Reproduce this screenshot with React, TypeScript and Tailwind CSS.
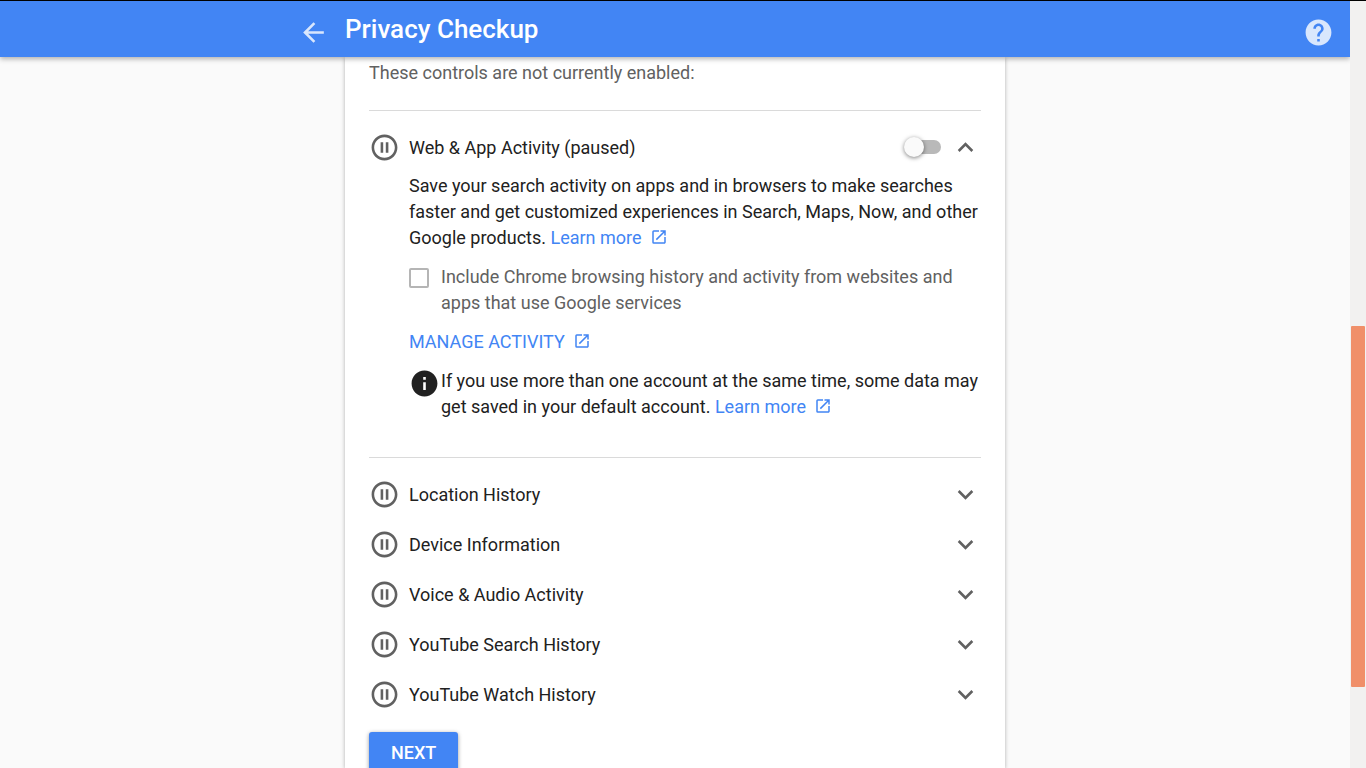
import { useState } from "react";
import {
  MdArrowBack,
  MdExpandLess,
  MdExpandMore,
  MdHelp,
  MdInfo,
  MdOpenInNew,
  MdPauseCircleOutline,
} from "react-icons/md";

const collapsedControls = [
  "Location History",
  "Device Information",
  "Voice & Audio Activity",
  "YouTube Search History",
  "YouTube Watch History",
];

function ExternalLink({ children }: { children: string }) {
  return (
    <a href="#" className="whitespace-nowrap text-[#4285f4]">
      {children}
      <MdOpenInNew className="ml-2 inline-block size-[18px] align-[-2px]" aria-hidden />
    </a>
  );
}

function Header() {
  return (
    <header className="z-10 grid h-14 shrink-0 grid-cols-[1fr_minmax(0,660px)_1fr] items-start bg-[#4285f4] text-white shadow-[0_2px_5px_rgba(0,0,0,0.3)]">
      <div className="flex justify-end pt-4 pr-4">
        <button type="button" aria-label="Back" className="text-white/80">
          <MdArrowBack className="size-[31px]" />
        </button>
      </div>
      <h1 className="pt-3 text-[26px] leading-8 font-medium">Privacy Checkup</h1>
      <div className="flex justify-end pt-4 pr-4">
        <button type="button" aria-label="Help" className="text-white/80">
          <MdHelp className="size-[31px]" />
        </button>
      </div>
    </header>
  );
}

function WebActivity() {
  const [enabled, setEnabled] = useState(false);
  const [chrome, setChrome] = useState(false);
  return (
    <section className="mt-6 border-t border-[#dadada] pt-3 pb-[37px]">
      <div className="mb-px flex h-[49px] items-center gap-[9px]">
        <MdPauseCircleOutline className="size-[31px] text-[#616161]" aria-hidden />
        <h2 className="flex-1">
          <label htmlFor="web-activity">Web &amp; App Activity (paused)</label>
        </h2>
        <input
          id="web-activity"
          type="checkbox"
          role="switch"
          checked={enabled}
          onChange={(e) => setEnabled(e.target.checked)}
          className="relative mb-px h-3.5 w-9 appearance-none rounded-full bg-[#b9b9b9] before:absolute before:-top-[3px] before:-left-px before:size-5 before:rounded-full before:bg-[#fafafa] before:shadow-[0_1px_4px_rgba(0,0,0,0.5)] checked:bg-[#a1c2fa] checked:before:left-[17px] checked:before:bg-[#4285f4]"
        />
        <button type="button" aria-label="Collapse" className="text-[#616161]">
          <MdExpandLess className="size-[31px]" />
        </button>
      </div>
      <div className="flex flex-col gap-[13px] pl-10">
        <p>
          Save your search activity on apps and in browsers to make searches faster and get customized
          experiences in Search, Maps, Now, and other Google products. <ExternalLink>Learn more</ExternalLink>
        </p>
        <div className="flex gap-3 text-[#616161]">
          <input
            id="chrome-history"
            type="checkbox"
            checked={chrome}
            onChange={(e) => setChrome(e.target.checked)}
            className="mt-1 size-5 shrink-0 appearance-none rounded-[2px] border-2 border-[#b5b5b5] checked:border-[#4285f4] checked:bg-[#4285f4]"
          />
          <label htmlFor="chrome-history">
            Include Chrome browsing history and activity from websites and apps that use Google services
          </label>
        </div>
        <div>
          <ExternalLink>MANAGE ACTIVITY</ExternalLink>
        </div>
        <div className="flex gap-px">
          <MdInfo className="size-[31px] shrink-0" aria-hidden />
          <p>
            If you use more than one account at the same time, some data may get saved in your default
            account. <ExternalLink>Learn more</ExternalLink>
          </p>
        </div>
      </div>
    </section>
  );
}

export default function App() {
  return (
    <div className="flex h-screen overflow-hidden border-t border-black bg-[#fafafa] font-[Roboto,sans-serif] text-lg leading-[26px] text-[#212121]">
      <div className="flex min-w-0 flex-1 flex-col overflow-hidden">
        <Header />
        <main className="mx-auto min-h-0 w-full max-w-[660px] flex-1 bg-white px-6 pt-[3px] shadow-[0_1px_4px_rgba(0,0,0,0.3)]">
          <p className="text-[#616161]">These controls are not currently enabled:</p>
          <WebActivity />
          <ul className="border-t border-[#dadada] py-3">
            {collapsedControls.map((name) => (
              <li key={name} className="pb-px">
                <button type="button" className="flex h-[49px] w-full items-center gap-[9px] text-left">
                  <MdPauseCircleOutline className="size-[31px] text-[#616161]" aria-hidden />
                  <span className="flex-1">{name}</span>
                  <MdExpandMore className="size-[31px] text-[#616161]" aria-hidden />
                </button>
              </li>
            ))}
          </ul>
          <button
            type="button"
            className="h-[42px] rounded-[3px] bg-[#4285f4] px-[22px] font-medium text-white shadow-[0_1px_4px_rgba(0,0,0,0.4)]"
          >
            NEXT
          </button>
        </main>
      </div>
      <div className="w-4 shrink-0 bg-[#f2f1f0] px-px pt-[325px]" aria-hidden>
        <div className="h-[361px] rounded-[1px] bg-[#f08f69]" />
      </div>
    </div>
  );
}
